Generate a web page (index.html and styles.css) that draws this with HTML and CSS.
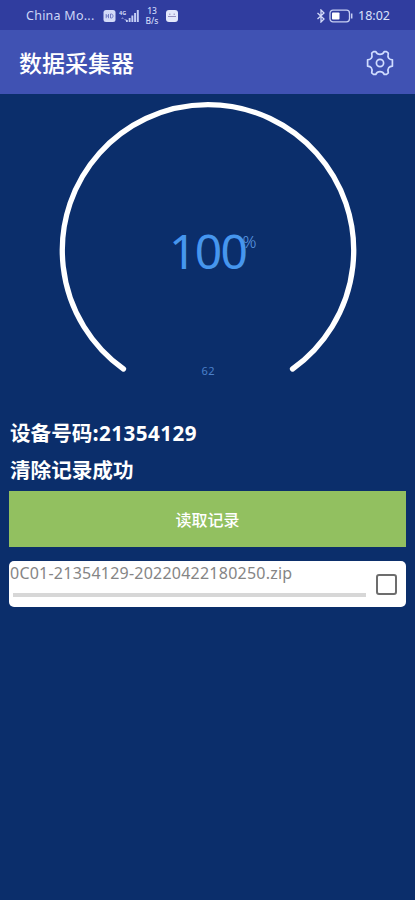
FILE: index.html
```html
<!DOCTYPE html>
<html lang="zh-CN">
<head>
<meta charset="utf-8">
<meta name="viewport" content="width=device-width, initial-scale=1">
<title>数据采集器</title>
<link rel="stylesheet" href="styles.css">
</head>
<body>
<div class="statusbar">
  <span class="carrier">China Mo...</span>
  <svg class="hd" width="13" height="12" viewBox="0 0 13 12"><rect x=".5" width="12" height="12" rx="2.5" fill="#d3daf8"/><path d="M3.2 4v4.200M3.200 6h2.300M5.500 4v4.200M7.500 4v4h1c2 0 2-4 0-4z" fill="none" stroke="#6672bd" stroke-width=".9"/></svg>
  <svg class="signal" width="21" height="14" viewBox="0 0 21 14"><text class="net" x="0" y="6">4G</text><g fill="#c3cdf4"><path d="M2 10l1.500-2 1.500 2zM5 10h3l-1.500 2z" opacity=".5"/><rect x="7" y="11" width="1.800" height="2"/><rect x="9.700" y="9" width="1.900" height="4"/><rect x="12.400" y="6.500" width="1.900" height="6.500"/><rect x="15.100" y="4" width="1.900" height="9"/><rect x="17.800" y="1" width="2" height="12"/></g></svg>
  <span class="speed"><span>13</span><span>B/s</span></span>
  <svg class="app" width="12" height="12" viewBox="0 0 12 12"><rect width="12" height="12" rx="3" fill="#e4e8fb"/><path d="M3 4.200h1.500M7.500 4.200H9M2 6.500h8" fill="none" stroke="#8a83b6" stroke-width=".9"/></svg>
  <svg class="bt" width="10" height="14" viewBox="0 0 10 14"><path d="M1.500 4L8 10 5 13V1l3 3-6.500 6" fill="none" stroke="#d3daf8" stroke-width="1.300"/></svg>
  <svg class="battery" width="24" height="14" viewBox="0 0 24 14"><rect x="1" y="1.200" width="19.500" height="11.600" rx="3" fill="none" stroke="#c7d0f4" stroke-width="1.300"/><rect x="3" y="3.500" width="7.500" height="7" rx=".8" fill="#fff"/><path d="M22.700 4.500v5" stroke="#c7d0f4" stroke-width="1.500"/></svg>
  <span class="clock">18:02</span>
</div>
<header class="appbar">
  <h1>数据采集器</h1>
  <svg class="gear" width="28" height="26" viewBox="-14 -13 28 26" fill="none" stroke="#cfdcff" stroke-width="1.700" stroke-linejoin="round"><path d="M-6.500-11.300H-4.200Q-3-8.600 0-8.600T4.200-11.300H6.500L8.300-9.900Q7.500-6.200 8.700-4.800T12.400-3.200V3.200Q9.900 3.400 8.700 4.800T8.300 9.900L6.500 11.300H4.200Q3 8.600 0 8.600T-4.200 11.300H-6.500L-8.300 9.900Q-7.500 6.200-8.700 4.800T-12.400 3.200V-3.200Q-9.900-3.400-8.700-4.800T-8.300-9.900Z"/><circle r="3.600"/></svg>
</header>
<main>
  <svg class="gauge" width="415" height="306" viewBox="0 94 415 306">
    <path d="M123.500 369A145.700 145.700 0 1 1 292.500 369" fill="none" stroke="#fff" stroke-width="5.300" stroke-linecap="round"/>
    <text class="value" x="169" y="268.500" textLength="79">100</text>
    <text class="unit" x="242.500" y="248" textLength="14" lengthAdjust="spacingAndGlyphs">%</text>
    <text class="sub" x="201.500" y="374.500" textLength="13">62</text>
  </svg>
  <p class="line device">设备号码:<span class="number">21354129</span></p>
  <p class="line">清除记录成功</p>
  <button class="read">读取记录</button>
  <section class="file">
    <div class="info">
      <span class="name">0C01-21354129-20220422180250.zip</span>
      <div class="track"></div>
    </div>
    <span class="check"></span>
  </section>
</main>
</body>
</html>
```
FILE: styles.css
```css
* { box-sizing: border-box; }
body {
  margin: 0;
  min-height: 900px;
  background: #0b2e6b;
  color: #fff;
  font-family: "Noto Sans", "Noto Sans CJK SC", sans-serif;
}
.statusbar {
  display: flex;
  align-items: center;
  height: 30px;
  padding: 1px 24px 0 26px;
  background: #303d9f;
  color: #cdd6f7;
}
.carrier { width: 77px; font-size: 12.500px; letter-spacing: .25px; white-space: nowrap; }
.signal { margin-left: 3px; }
.net { font: bold 5.500px "Noto Sans", sans-serif; fill: #d3daf8; }
.speed {
  display: flex;
  flex-direction: column;
  width: 14px;
  margin-left: 5px;
  font-size: 8.500px;
  font-weight: 500;
  line-height: 10px;
  text-align: center;
}
.app { margin-left: 7px; }
.bt { margin-left: auto; }
.battery { margin-left: 3px; }
.clock { width: 33px; margin-left: 5px; font-size: 12.500px; white-space: nowrap; color: #dce2fb; }
.appbar {
  display: flex;
  align-items: center;
  justify-content: space-between;
  height: 64px;
  padding: 0 21px 0 19px;
  background: #4052b3;
}
h1 { margin: 0; font: 500 23px/32px "Noto Sans CJK SC", sans-serif; }
.gear { margin-top: 2px; }
.gauge { display: block; }
.value { font-size: 48px; fill: #4696ee; }
.unit { font-size: 17px; fill: #5d9be4; font-weight: 300; }
.sub { font-size: 11px; fill: #4c80c9; }
main { display: flex; flex-direction: column; }
.line {
  margin: 0 10px;
  height: 37px;
  font: 700 20.600px/37px "Noto Sans CJK SC", sans-serif;
  white-space: nowrap;
}
.device { margin-top: 14px; }
.number { font-family: "Noto Sans", sans-serif; font-size: 20.600px; letter-spacing: .45px; }
.read {
  height: 56px;
  margin: 3px 9px 0;
  padding: 0 0 1px;
  border: 0;
  background: #92c060;
  color: #fff;
  font: 500 16px "Noto Sans CJK SC", sans-serif;
}
.file {
  display: flex;
  align-items: center;
  height: 46px;
  margin: 14px 9px 0;
  padding-right: 9px;
  border-radius: 5px;
  background: #fff;
}
.info { flex: 1; height: 46px; padding-left: 1px; }
.name { display: block; height: 32px; font-size: 16px; line-height: 25px; letter-spacing: .23px; color: #858585; white-space: nowrap; }
.track { height: 4px; margin: 0 10px 0 3px; background: #d7d7d7; }
.check { width: 21px; height: 21px; border: 2px solid #6d6d6d; border-radius: 3px; }
```
